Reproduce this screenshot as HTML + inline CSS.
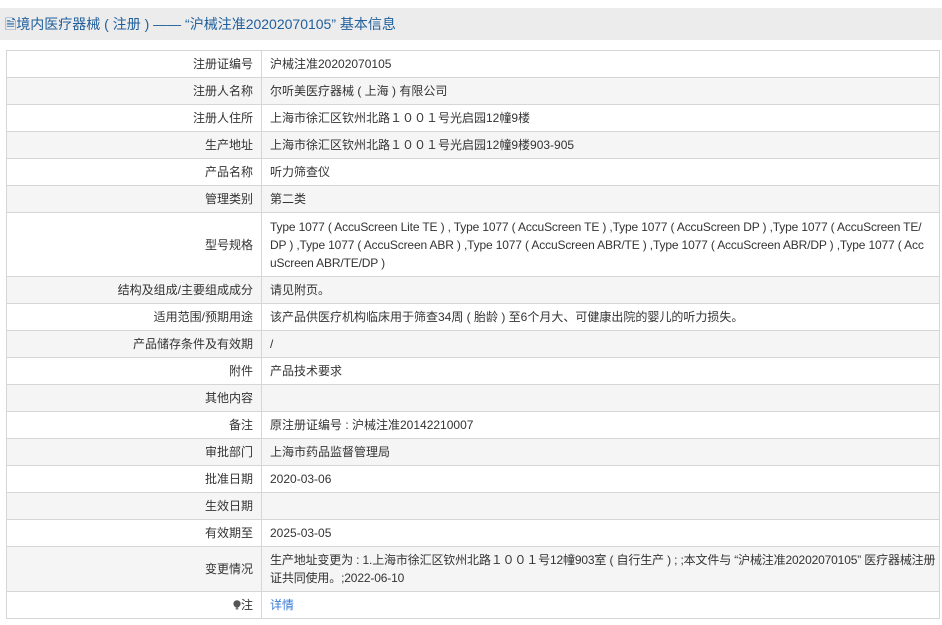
<!DOCTYPE html>
<html><head><meta charset="utf-8"><style>
body{margin:0;background:#fff;font-family:"Liberation Sans","Noto Sans CJK SC",sans-serif;font-size:12px;color:#333;}
.hd{position:absolute;left:0;top:8px;width:942px;height:32px;background:#ececec;color:#1f5f9c;font-size:14px;line-height:32px;padding-left:5px;box-sizing:border-box;white-space:nowrap}
table{position:absolute;left:6px;top:50px;width:934px;border-collapse:collapse;table-layout:fixed}
td{border:1px solid #d6d6d6;height:26px;padding:0 8px;white-space:nowrap;line-height:18px;overflow:hidden}
td.l{width:238px;text-align:right;}
tr:nth-child(even) td{background:#f5f5f5}
a{color:#3a7bd5;text-decoration:none}
.t{letter-spacing:-0.15px}
</style></head><body>
<div class="hd">🗎境内医疗器械 ( 注册 ) —— “沪械注准20202070105” 基本信息</div>
<table>
<tr><td class="l">注册证编号</td><td>沪械注准20202070105</td></tr>
<tr><td class="l">注册人名称</td><td>尔听美医疗器械 ( 上海 ) 有限公司</td></tr>
<tr><td class="l">注册人住所</td><td>上海市徐汇区钦州北路１００１号光启园12幢9楼</td></tr>
<tr><td class="l">生产地址</td><td>上海市徐汇区钦州北路１００１号光启园12幢9楼903-905</td></tr>
<tr><td class="l">产品名称</td><td>听力筛查仪</td></tr>
<tr><td class="l">管理类别</td><td>第二类</td></tr>
<tr><td class="l" style="height:63px">型号规格</td><td class="t">Type 1077 ( AccuScreen Lite TE ) , Type 1077 ( AccuScreen TE ) ,Type 1077 ( AccuScreen DP ) ,Type 1077 ( AccuScreen TE/<br>DP ) ,Type 1077 ( AccuScreen ABR ) ,Type 1077 ( AccuScreen ABR/TE ) ,Type 1077 ( AccuScreen ABR/DP ) ,Type 1077 ( Acc<br>uScreen ABR/TE/DP )</td></tr>
<tr><td class="l">结构及组成/主要组成成分</td><td>请见附页。</td></tr>
<tr><td class="l">适用范围/预期用途</td><td>该产品供医疗机构临床用于筛查34周 ( 胎龄 ) 至6个月大、可健康出院的婴儿的听力损失。</td></tr>
<tr><td class="l">产品储存条件及有效期</td><td>/</td></tr>
<tr><td class="l">附件</td><td>产品技术要求</td></tr>
<tr><td class="l">其他内容</td><td></td></tr>
<tr><td class="l">备注</td><td>原注册证编号 : 沪械注准20142210007</td></tr>
<tr><td class="l">审批部门</td><td>上海市药品监督管理局</td></tr>
<tr><td class="l">批准日期</td><td>2020-03-06</td></tr>
<tr><td class="l">生效日期</td><td></td></tr>
<tr><td class="l">有效期至</td><td>2025-03-05</td></tr>
<tr><td class="l" style="height:44px">变更情况</td><td class="t">生产地址变更为 : 1.上海市徐汇区钦州北路１００１号12幢903室 ( 自行生产 ) ; ;本文件与 “沪械注准20202070105” 医疗器械注册<br>证共同使用。;2022-06-10</td></tr>
<tr><td class="l"><svg width="8" height="10" viewBox="0 0 8 10" style="vertical-align:-1px"><circle cx="4" cy="3.8" r="3.6" fill="#555"/><rect x="2.7" y="7" width="2.6" height="2.5" fill="#777"/></svg>注</td><td><a>详情</a></td></tr>
</table>
</body></html>
